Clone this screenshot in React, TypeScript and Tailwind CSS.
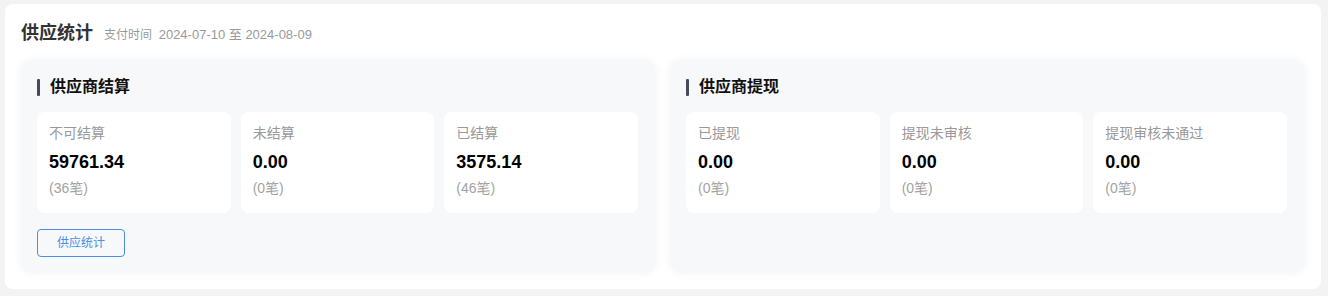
const font = { fontFamily: '"Liberation Sans", "Noto Sans CJK SC", sans-serif' };

type Stat = { label: string; value: string; count: string };

const settle: Stat[] = [
  { label: "不可结算", value: "59761.34", count: "(36笔)" },
  { label: "未结算", value: "0.00", count: "(0笔)" },
  { label: "已结算", value: "3575.14", count: "(46笔)" },
];

const withdraw: Stat[] = [
  { label: "已提现", value: "0.00", count: "(0笔)" },
  { label: "提现未审核", value: "0.00", count: "(0笔)" },
  { label: "提现审核未通过", value: "0.00", count: "(0笔)" },
];

function StatCard({ s }: { s: Stat }) {
  return (
    <div className="bg-white rounded-lg px-3 pt-[10px] pb-[14px] h-[101px]">
      <div className="text-[14px] leading-[22px] text-[#999]">{s.label}</div>
      <div className="mt-[6px] text-[18px] leading-6 font-bold text-black">{s.value}</div>
      <div className="mt-[3px] text-[14px] leading-[22px] text-[#a3a3a3]">{s.count}</div>
    </div>
  );
}

function Panel({ title, stats, button }: { title: string; stats: Stat[]; button?: boolean }) {
  return (
    <div className="flex-1 bg-[#f7f8fa] rounded-xl px-4 pt-[15px] pb-4 shadow-[0_0_10px_rgba(0,0,0,0.05)]">
      <div className="flex items-center gap-[10px] h-6">
        <span className="w-[3px] h-[17px] bg-[#474b59] rounded-[1px]" />
        <span className="text-[16px] font-bold text-[#111]">{title}</span>
      </div>
      <div className="mt-[13px] grid grid-cols-3 gap-[10px] pr-[2px]">
        {stats.map((s) => (
          <StatCard key={s.label} s={s} />
        ))}
      </div>
      {button && (
        <button className="mt-4 w-[88px] h-[28px] rounded border border-[#4a90e2] text-[12px] text-[#4a90e2] bg-transparent">
          供应统计
        </button>
      )}
    </div>
  );
}

export default function App() {
  return (
    <div style={font} className="w-[1328px] h-[296px] bg-[#f3f3f3] pt-1 pl-[5px] pr-[7px]">
      <div className="bg-white rounded-lg px-4 pt-4 pb-4 h-[285px]">
        <div className="flex items-baseline gap-[11px] h-[26px]">
          <h1 className="text-[18px] leading-[26px] font-bold text-[#333]">供应统计</h1>
          <span className="text-[12px] text-[#999]">
            支付时间&nbsp;&nbsp;<span className="text-[13px]">2024-07-10 至 2024-08-09</span>
          </span>
        </div>
        <div className="mt-[14px] flex gap-[14px]">
          <Panel title="供应商结算" stats={settle} button />
          <Panel title="供应商提现" stats={withdraw} />
        </div>
      </div>
    </div>
  );
}
